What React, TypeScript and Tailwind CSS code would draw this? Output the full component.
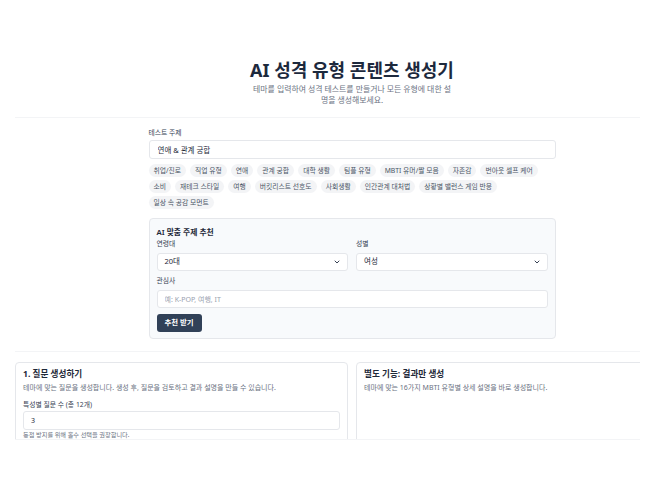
import { ChevronDown } from 'lucide-react'

const TOPICS = [
  '취업/진로', '직업 유형', '연애', '관계 궁합', '대학 생활', '팀플 유형', 'MBTI 유머/짤 모음', '자존감',
  '번아웃 셀프 케어', '소비', '재테크 스타일', '여행', '버킷리스트 선호도', '사회생활', '인간관계 대처법',
  '상황별 밸런스 게임 반응', '일상 속 공감 모먼트',
]

function Label({ children }: { children: React.ReactNode }) {
  return <div className="h-[10px] text-[6.8px] leading-[10px] text-gray-700">{children}</div>
}

function Select({ value }: { value: string }) {
  return (
    <div className="relative flex h-[18px] items-center rounded-[3px] border border-gray-200 bg-white pl-[7px] text-[7.5px] text-gray-800">
      {value}
      <ChevronDown size={8} strokeWidth={3} className="absolute right-[6px] top-1/2 -translate-y-1/2 text-gray-700" />
    </div>
  )
}

export default function App() {
  return (
    <div className="h-[488px] w-full bg-white font-['Noto_Sans','Noto_Sans_CJK_KR',sans-serif]">
      <div className="ml-[15px] w-[625px] overflow-hidden">
        <div className="w-[674px]">
          {/* header */}
          <header className="border-b border-gray-100 pt-[59px] pb-[11px] flex flex-col items-center">
            <h1 className="text-[18px] leading-[22px] font-bold text-slate-800">AI 성격 유형 콘텐츠 생성기</h1>
            <p className="mt-[3px] w-[200px] text-center text-[7.9px] leading-[11px] text-gray-500">
              테마를 입력하여 성격 테스트를 만들거나 모든 유형에 대한 설명을 생성해보세요.
            </p>
          </header>

          {/* topic */}
          <section className="mx-auto w-[407px] pt-[10px] pb-[12px]">
            <Label>테스트 주제</Label>
            <input
              defaultValue="연애 & 관계 궁합"
              className="mt-[2px] block h-[19px] w-full rounded-[3px] border border-gray-200 px-[8px] text-[7.5px] text-gray-800 outline-none"
            />
            <div className="mt-[5px] flex flex-wrap gap-x-[4px] gap-y-[3px]">
              {TOPICS.map(t => (
                <span key={t} className="h-[13px] rounded-full bg-gray-100 px-[5px] text-[6.8px] leading-[13px] text-gray-600">
                  {t}
                </span>
              ))}
            </div>

            <div className="mt-[9px] rounded-[4px] border border-gray-200 bg-slate-50 px-[7px] pt-[7px] pb-[6px]">
              <div className="h-[12px] text-[7.8px] leading-[12px] font-semibold text-gray-800">AI 맞춤 주제 추천</div>
              <div className="mt-[1px] grid grid-cols-2 gap-x-[8px]">
                <div>
                  <Label>연령대</Label>
                  <div className="mt-[4px]"><Select value="20대" /></div>
                </div>
                <div>
                  <Label>성별</Label>
                  <div className="mt-[4px]"><Select value="여성" /></div>
                </div>
              </div>
              <div className="mt-[5px]"><Label>관심사</Label></div>
              <input
                placeholder="예: K-POP, 여행, IT"
                className="mt-[4px] block h-[18px] w-full rounded-[3px] border border-gray-200 bg-white px-[7px] text-[7px] text-gray-800 placeholder:text-gray-400 outline-none"
              />
              <button className="mt-[6px] block h-[18px] rounded-[3px] bg-slate-700 px-[8px] text-[7.4px] font-semibold text-white">
                추천 받기
              </button>
            </div>
          </section>

          {/* cards */}
          <section className="h-[89px] overflow-hidden border-y border-gray-100 pt-[10px]">
            <div className="grid grid-cols-2 gap-x-[8px]">
              <div className="h-[200px] rounded-[4px] border border-gray-200 px-[7px] pt-[5px]">
                <h2 className="h-[13px] text-[8.6px] leading-[13px] font-bold text-gray-800">1. 질문 생성하기</h2>
                <p className="mt-[2px] h-[10px] text-[7px] leading-[10px] text-gray-500">
                  테마에 맞는 질문을 생성합니다. 생성 후, 질문을 검토하고 결과 설명을 만들 수 있습니다.
                </p>
                <div className="mt-[7px]"><Label>특성별 질문 수 (총 12개)</Label></div>
                <input
                  defaultValue="3"
                  className="mt-[1px] block h-[19px] w-full rounded-[3px] border border-gray-200 px-[7px] text-[7px] text-gray-800 outline-none"
                />
                <p className="mt-[1px] text-[6.2px] leading-[8px] text-gray-500">동점 방지를 위해 홀수 선택을 권장합니다.</p>
              </div>
              <div className="h-[200px] rounded-[4px] border border-gray-200 px-[7px] pt-[5px]">
                <h2 className="h-[13px] text-[8.6px] leading-[13px] font-bold text-gray-800">별도 기능: 결과만 생성</h2>
                <p className="mt-[2px] h-[10px] text-[7px] leading-[10px] text-gray-500">
                  테마에 맞는 16가지 MBTI 유형별 상세 설명을 바로 생성합니다.
                </p>
              </div>
            </div>
          </section>
        </div>
      </div>
    </div>
  )
}
